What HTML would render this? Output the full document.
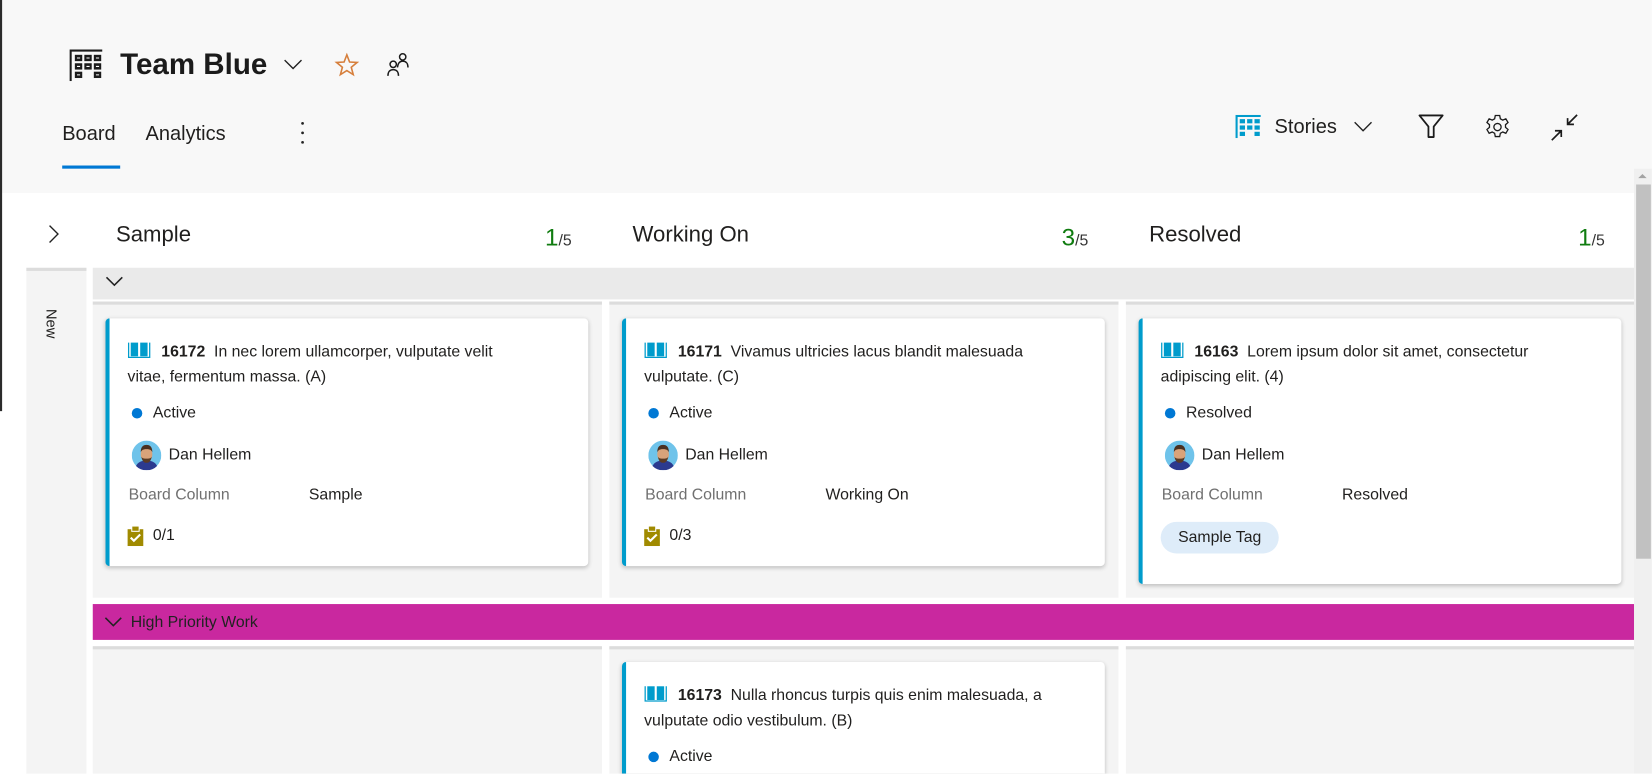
<!DOCTYPE html>
<html><head><meta charset="utf-8"><style>
*{box-sizing:border-box;margin:0;padding:0}
html,body{width:1652px;height:774px;overflow:hidden;background:#fff}
body{font-family:"Liberation Sans",sans-serif;color:#201f1e}
#stage{position:absolute;left:0;top:0;width:1567px;height:734px;transform:scale(1.0542);transform-origin:0 0;overflow:hidden;background:#fff}
.a{position:absolute}
.hdr{left:0;top:0;width:1567px;height:183px;background:#f8f8f8}
.card{position:absolute;background:#fff;border-radius:4px;border-left:4px solid #009ccc;box-shadow:0 1.5px 4px rgba(0,0,0,.22);font-size:15px;overflow:hidden}
.cell{position:absolute;background:#f4f4f4;border-top:3px solid #dcdcdc;overflow:hidden}
.t{position:absolute;white-space:nowrap}
.ttl{position:absolute;left:17px;top:20px;line-height:24px;text-indent:32px;white-space:nowrap}
.gray{color:#707070}
.dot{position:absolute;width:10px;height:10px;border-radius:50%;background:#0078d4}
.cnt{position:absolute;white-space:nowrap;font-size:15px;color:#333}
.cnt b{font-weight:normal;color:#107c10;font-size:23px}
</style></head><body><div id="stage">
<div class="a hdr"></div>
<div class="a" style="left:0;top:0;width:2px;height:390px;background:#2b2b2b"></div>
<svg class="a" style="left:66px;top:47px" width="32" height="30" viewBox="0 0 32 30">
<path d="M1 30V1H31" stroke="#1b1b1b" stroke-width="2" fill="none"/>
<g fill="#1b1b1b"><rect x="5" y="5" width="7" height="6"/><rect x="14" y="5" width="7" height="6"/><rect x="23" y="5" width="7" height="6"/>
<rect x="5" y="13" width="7" height="6"/><rect x="14" y="13" width="7" height="6"/><rect x="23" y="13" width="7" height="6"/>
<rect x="5" y="21" width="7" height="6"/><rect x="23" y="21" width="7" height="6"/></g>
<g stroke="#fff" stroke-width="1"><path d="M7 8h3M16 8h3M25 8h3M7 16h3M16 16h3M25 16h3M7 24h3M25 24h3"/></g></svg>
<div class="t" style="left:114px;top:45px;font-size:28px;font-weight:bold;color:#1b1b1b">Team Blue</div>
<svg class="a" style="left:269px;top:56px" width="18" height="10"><path d="M1 1l8 8 8-8" stroke="#222" stroke-width="1.3" fill="none"/></svg>
<svg class="a" style="left:317px;top:50px" width="24" height="24" viewBox="0 0 24 24"><path d="M12 2l2.6 6.8 7.2.4-5.6 4.6 1.9 7L12 16.9 5.9 20.8l1.9-7L2.2 9.2l7.2-.4z" stroke="#d67f3c" stroke-width="1.5" fill="none"/></svg>
<svg class="a" style="left:366px;top:49px" width="24" height="24" viewBox="0 0 24 24" fill="none" stroke="#1b1b1b" stroke-width="1.4"><circle cx="7" cy="12" r="3"/><path d="M2 23c0-4 2-6 5-6s5 2 5 6"/><circle cx="16" cy="5" r="3"/><path d="M11 15c.5-4 2-6 5-6s5 2 5 6"/></svg>
<div class="t" style="left:59px;top:117px;font-size:19px">Board</div>
<div class="a" style="left:59px;top:157px;width:55px;height:3px;background:#0078d4"></div>
<div class="t" style="left:138px;top:117px;font-size:19px">Analytics</div>
<svg class="a" style="left:285px;top:115px" width="4" height="22"><circle cx="2" cy="2" r="1.3" fill="#222"/><circle cx="2" cy="11" r="1.3" fill="#222"/><circle cx="2" cy="20" r="1.3" fill="#222"/></svg>
<svg class="a" style="left:1172px;top:109px" width="24" height="22" viewBox="0 0 24 22"><path d="M1 22V1H24" stroke="#009ccc" stroke-width="2" fill="none"/>
<g fill="#009ccc"><rect x="4" y="4" width="5" height="4"/><rect x="11" y="4" width="5" height="4"/><rect x="18" y="4" width="5" height="4"/><rect x="4" y="10" width="5" height="4"/><rect x="11" y="10" width="5" height="4"/><rect x="18" y="10" width="5" height="4"/><rect x="4" y="16" width="5" height="4"/><rect x="18" y="16" width="5" height="4"/></g></svg>
<div class="t" style="left:1209px;top:110px;font-size:19px">Stories</div>
<svg class="a" style="left:1284px;top:115px" width="18" height="10"><path d="M1 1l8 8 8-8" stroke="#222" stroke-width="1.3" fill="none"/></svg>
<svg class="a" style="left:1345px;top:108px" width="25" height="24" viewBox="0 0 25 24"><path d="M1.5 1.5h22L15 12v10h-5V12z" stroke="#1b1b1b" stroke-width="1.7" fill="none" stroke-linejoin="round"/></svg>
<svg class="a" style="left:1408px;top:108px" width="25" height="25" viewBox="0 0 24 24" fill="none" stroke="#1b1b1b" stroke-width="1.2"><path d="M10 1.5h4l.6 3 2.2 1.2 2.8-1.2 2 3.4-2.3 2 0 2.4 2.3 2-2 3.4-2.8-1.2-2.2 1.2-.6 3h-4l-.6-3-2.2-1.2-2.8 1.2-2-3.4 2.3-2 0-2.4-2.3-2 2-3.4 2.8 1.2L9.4 4.5z"/><circle cx="12" cy="12" r="3.3"/></svg>
<svg class="a" style="left:1471px;top:108px" width="26" height="26" viewBox="0 0 26 26" fill="none" stroke="#1b1b1b" stroke-width="1.6"><path d="M25 1l-9 9M16 4v6h6M1 25l9-9M4 16h6v6"/></svg>
<div class="a" style="left:1550px;top:160px;width:17px;height:574px;background:#f0f0f0"></div>
<div class="a" style="left:1552px;top:175px;width:14px;height:355px;background:#c1c1c1"></div>
<svg class="a" style="left:1553px;top:164px" width="10" height="6"><path d="M1 5l4-4 4 4z" fill="#a3a3a3"/></svg>
<svg class="a" style="left:46px;top:213px" width="10" height="18"><path d="M1 1l8 8-8 8" stroke="#222" stroke-width="1.3" fill="none"/></svg>
<div class="t" style="left:110px;top:211px;font-size:21px">Sample</div>
<div class="cnt" style="left:517px;top:212px"><b>1</b>/5</div>
<div class="t" style="left:600px;top:211px;font-size:21px">Working On</div>
<div class="cnt" style="left:1007px;top:212px"><b>3</b>/5</div>
<div class="t" style="left:1090px;top:211px;font-size:21px">Resolved</div>
<div class="cnt" style="left:1497px;top:212px"><b>1</b>/5</div>
<div class="cell" style="left:25px;top:254px;width:57px;height:480px"></div>
<div class="t" style="top:293px;font-size:14px;transform:rotate(90deg);transform-origin:0 0;left:57px">New</div>
<div class="a" style="left:88px;top:254px;width:1462px;height:30px;background:#eaeaea"></div>
<svg class="a" style="left:100px;top:262px" width="17" height="10"><path d="M1 1l7.5 7.5L16 1" stroke="#222" stroke-width="1.5" fill="none"/></svg>
<div class="cell" style="left:88px;top:286px;width:483px;height:281px"></div>
<div class="cell" style="left:578px;top:286px;width:483px;height:281px"></div>
<div class="cell" style="left:1068px;top:286px;width:482px;height:281px"></div>
<div class="a" style="left:88px;top:573px;width:1462px;height:34px;background:#c9289f"></div>
<svg class="a" style="left:99px;top:585px" width="17" height="10"><path d="M1 1l7.5 7.5L16 1" stroke="#222" stroke-width="1.5" fill="none"/></svg>
<div class="t" style="left:124px;top:582px;font-size:15px;color:#222">High Priority Work</div>
<div class="cell" style="left:88px;top:613px;width:483px;height:121px"></div>
<div class="cell" style="left:578px;top:613px;width:483px;height:121px"></div>
<div class="cell" style="left:1068px;top:613px;width:482px;height:121px"></div>

<div class="card" style="left:100px;top:302px;width:458px;height:235px">
 <svg class="a" style="left:17px;top:22px" width="22" height="17" viewBox="0 0 22 17"><path d="M1 1v14h20V1" stroke="#009ccc" stroke-width="1.2" fill="none"/><rect x="3" y="1" width="7" height="13" fill="#009ccc"/><rect x="12" y="1" width="7" height="13" fill="#009ccc"/></svg>
 <div class="ttl"><b>16172</b>&nbsp;&nbsp;In nec lorem ullamcorper, vulputate velit<br>vitae, fermentum massa. (A)</div>
 <div class="dot" style="left:21px;top:85px"></div><div class="t" style="left:41px;top:81px">Active</div>
 <div class="a" style="left:21px;top:116px"><svg width="28" height="28" viewBox="0 0 28 28"><circle cx="14" cy="14" r="14" fill="#6fc3ea"/><path d="M4 24c2-4 6-5 10-5s8 1 10 5a14 14 0 0 1-20 0z" fill="#2b3a8f"/><ellipse cx="14" cy="13" rx="5.5" ry="7" fill="#d9a37a"/><path d="M8.5 11c0-5 2-7 5.5-7s5.5 2 5.5 7c-1-2-2-3-5.5-3s-4.5 1-5.5 3z" fill="#4a3020"/><path d="M9 15c1 5 3 6 5 6s4-1 5-6c-1 2-3 2-5 2s-4 0-5-2z" fill="#5a3b25"/></svg></div>
 <div class="t" style="left:56px;top:121px">Dan Hellem</div>
 <div class="t gray" style="left:18px;top:159px">Board Column</div><div class="t" style="left:189px;top:159px">Sample</div>
 <svg class="a" style="left:17px;top:197px" width="15" height="19" viewBox="0 0 15 19"><rect x="0" y="3" width="15" height="16" fill="#a08a00"/><rect x="4" y="0" width="7" height="5" fill="#a08a00" stroke="#fff" stroke-width="1"/><path d="M3 11l3 3 6-6" stroke="#fff" stroke-width="2" fill="none"/></svg>
 <div class="t" style="left:41px;top:197px">0/1</div>
</div>

<div class="card" style="left:590px;top:302px;width:458px;height:235px">
 <svg class="a" style="left:17px;top:22px" width="22" height="17" viewBox="0 0 22 17"><path d="M1 1v14h20V1" stroke="#009ccc" stroke-width="1.2" fill="none"/><rect x="3" y="1" width="7" height="13" fill="#009ccc"/><rect x="12" y="1" width="7" height="13" fill="#009ccc"/></svg>
 <div class="ttl"><b>16171</b>&nbsp;&nbsp;Vivamus ultricies lacus blandit malesuada<br>vulputate. (C)</div>
 <div class="dot" style="left:21px;top:85px"></div><div class="t" style="left:41px;top:81px">Active</div>
 <div class="a" style="left:21px;top:116px"><svg width="28" height="28" viewBox="0 0 28 28"><circle cx="14" cy="14" r="14" fill="#6fc3ea"/><path d="M4 24c2-4 6-5 10-5s8 1 10 5a14 14 0 0 1-20 0z" fill="#2b3a8f"/><ellipse cx="14" cy="13" rx="5.5" ry="7" fill="#d9a37a"/><path d="M8.5 11c0-5 2-7 5.5-7s5.5 2 5.5 7c-1-2-2-3-5.5-3s-4.5 1-5.5 3z" fill="#4a3020"/><path d="M9 15c1 5 3 6 5 6s4-1 5-6c-1 2-3 2-5 2s-4 0-5-2z" fill="#5a3b25"/></svg></div>
 <div class="t" style="left:56px;top:121px">Dan Hellem</div>
 <div class="t gray" style="left:18px;top:159px">Board Column</div><div class="t" style="left:189px;top:159px">Working On</div>
 <svg class="a" style="left:17px;top:197px" width="15" height="19" viewBox="0 0 15 19"><rect x="0" y="3" width="15" height="16" fill="#a08a00"/><rect x="4" y="0" width="7" height="5" fill="#a08a00" stroke="#fff" stroke-width="1"/><path d="M3 11l3 3 6-6" stroke="#fff" stroke-width="2" fill="none"/></svg>
 <div class="t" style="left:41px;top:197px">0/3</div>
</div>

<div class="card" style="left:1080px;top:302px;width:458px;height:252px">
 <svg class="a" style="left:17px;top:22px" width="22" height="17" viewBox="0 0 22 17"><path d="M1 1v14h20V1" stroke="#009ccc" stroke-width="1.2" fill="none"/><rect x="3" y="1" width="7" height="13" fill="#009ccc"/><rect x="12" y="1" width="7" height="13" fill="#009ccc"/></svg>
 <div class="ttl"><b>16163</b>&nbsp;&nbsp;Lorem ipsum dolor sit amet, consectetur<br>adipiscing elit. (4)</div>
 <div class="dot" style="left:21px;top:85px"></div><div class="t" style="left:41px;top:81px">Resolved</div>
 <div class="a" style="left:21px;top:116px"><svg width="28" height="28" viewBox="0 0 28 28"><circle cx="14" cy="14" r="14" fill="#6fc3ea"/><path d="M4 24c2-4 6-5 10-5s8 1 10 5a14 14 0 0 1-20 0z" fill="#2b3a8f"/><ellipse cx="14" cy="13" rx="5.5" ry="7" fill="#d9a37a"/><path d="M8.5 11c0-5 2-7 5.5-7s5.5 2 5.5 7c-1-2-2-3-5.5-3s-4.5 1-5.5 3z" fill="#4a3020"/><path d="M9 15c1 5 3 6 5 6s4-1 5-6c-1 2-3 2-5 2s-4 0-5-2z" fill="#5a3b25"/></svg></div>
 <div class="t" style="left:56px;top:121px">Dan Hellem</div>
 <div class="t gray" style="left:18px;top:159px">Board Column</div><div class="t" style="left:189px;top:159px">Resolved</div>
 <div class="t" style="left:17px;top:193px;height:30px;width:112px;border-radius:15px;background:#deecf9;line-height:30px;text-align:center">Sample Tag</div>
</div>

<div class="card" style="left:590px;top:628px;width:458px;height:106px;border-bottom-left-radius:0;border-bottom-right-radius:0">
 <svg class="a" style="left:17px;top:22px" width="22" height="17" viewBox="0 0 22 17"><path d="M1 1v14h20V1" stroke="#009ccc" stroke-width="1.2" fill="none"/><rect x="3" y="1" width="7" height="13" fill="#009ccc"/><rect x="12" y="1" width="7" height="13" fill="#009ccc"/></svg>
 <div class="ttl"><b>16173</b>&nbsp;&nbsp;Nulla rhoncus turpis quis enim malesuada, a<br>vulputate odio vestibulum. (B)</div>
 <div class="dot" style="left:21px;top:85px"></div><div class="t" style="left:41px;top:81px">Active</div>
</div>
</div></body></html>
